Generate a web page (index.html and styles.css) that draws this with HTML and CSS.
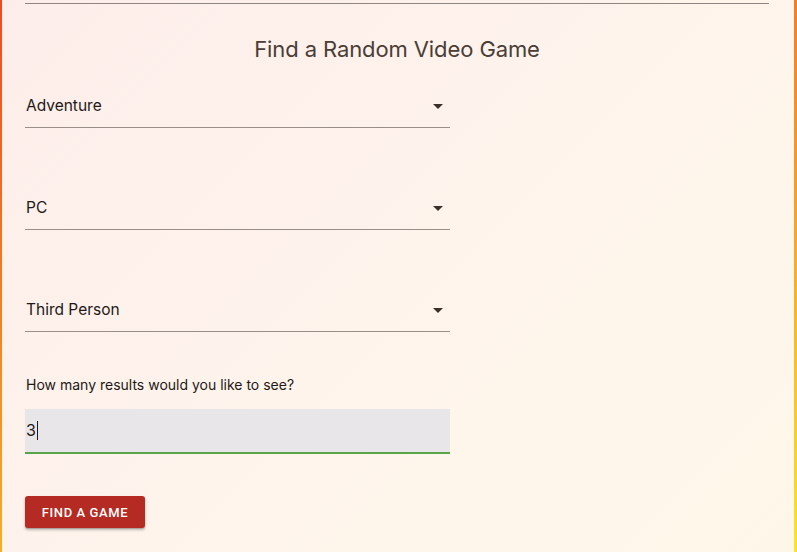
FILE: index.html
```html
<!DOCTYPE html>
<html lang="en">
<head>
<meta charset="utf-8">
<title>Find a Random Video Game</title>
<link rel="stylesheet" href="styles.css">
</head>
<body>
<div class="frame">
  <hr class="rule">
  <h1 class="title">Find a Random Video Game</h1>
  <form class="form">
    <div class="select first">
      <span class="value">Adventure</span>
      <span class="arrow"></span>
    </div>
    <div class="select">
      <span class="value">PC</span>
      <span class="arrow"></span>
    </div>
    <div class="select third">
      <span class="value">Third Person</span>
      <span class="arrow"></span>
    </div>
    <label class="label">How many results would you like to see?</label>
    <div class="filled">
      <span class="value">3</span><span class="caret"></span>
    </div>
    <button type="button" class="btn">Find a Game</button>
  </form>
</div>
</body>
</html>
```
FILE: styles.css
```css
html, body {
  margin: 0;
  padding: 0;
  height: 100%;
}
body {
  font-family: Inter, Roboto, "Liberation Sans", sans-serif;
  color: #231815;
}
.frame {
  box-sizing: border-box;
  height: 552px;
  border-style: solid;
  border-width: 0 3px 0 2px;
  border-image: linear-gradient(160deg, #ef4a22 0%, #f39526 50%, #f7e52c 100%) 1;
  background: linear-gradient(135deg, #fdedea 0%, #fef4ec 50%, #fef7e9 100%);
  padding: 3px 25px 0 23px;
  display: flex;
  flex-direction: column;
}
.rule {
  margin: 0;
  border: 0;
  height: 1px;
  background: #8f8681;
}
.title {
  margin: 31px 0 0;
  font-size: 22px;
  line-height: 28px;
  font-weight: 400;
  color: #4a3d37;
  text-align: center;
  letter-spacing: -0.1px;
}
.form {
  display: flex;
  flex-direction: column;
  align-items: flex-start;
  margin-top: 31px;
}
.select {
  box-sizing: border-box;
  width: 425px;
  display: flex;
  align-items: center;
  justify-content: space-between;
  height: 34px;
  padding: 0 7px 10px 1px;
  border-bottom: 1px solid #9a8e88;
  margin-bottom: 68px;
  font-size: 15.5px;
  line-height: 22px;
}
.select.third {
  margin-bottom: 43px;
}
.value {
  color: #231815;
}
.arrow {
  width: 0;
  height: 0;
  border-left: 5px solid transparent;
  border-right: 5px solid transparent;
  border-top: 5px solid #3b2f2a;
  margin-top: 2px;
}
.label {
  font-size: 14px;
  line-height: 20px;
  color: #231815;
  margin-left: 1px;
}
.filled {
  box-sizing: border-box;
  margin-top: 14px;
  width: 425px;
  height: 45px;
  background: #e8e6e9;
  border-bottom: 2px solid #5aa54a;
  display: flex;
  align-items: center;
  padding: 0 0 1px 1px;
  font-size: 16px;
}
.caret {
  display: inline-block;
  width: 1px;
  height: 19px;
  background: #231815;
  margin-left: 1px;
}
.btn {
  margin-top: 42px;
  width: 120px;
  height: 32px;
  border: 0;
  border-radius: 3px;
  background: #b52a22;
  color: #fff;
  font-family: Roboto, "Liberation Sans", sans-serif;
  font-size: 13px;
  font-weight: 500;
  letter-spacing: 0.6px;
  text-transform: uppercase;
  box-shadow: 0 2px 3px rgba(0,0,0,0.25), 0 1px 1px rgba(0,0,0,0.15);
  padding: 0;
}
```
